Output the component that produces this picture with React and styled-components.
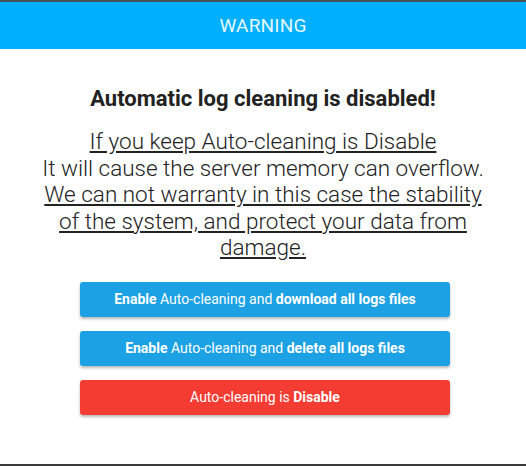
import React from "react";
import styled, { createGlobalStyle } from "styled-components";

const Global = createGlobalStyle`
  html, body { margin: 0; padding: 0; background: #fff; }
  body { font-family: Roboto, "Liberation Sans", sans-serif; }
`;

const Frame = styled.div`
  width: 526px;
  height: 466px;
  box-sizing: border-box;
  border-top: 2px solid #4b5258;
  border-bottom: 2px solid #3a3a3a;
  display: flex;
  flex-direction: column;
  background: #fff;
`;

const Header = styled.div`
  height: 47px;
  background: #00b0ff;
  color: #e6f8ff;
  font-size: 19px;
  font-weight: 400;
  display: flex;
  align-items: center;
  justify-content: center;
  letter-spacing: 0.2px;
`;

const Content = styled.div`
  display: flex;
  flex-direction: column;
  align-items: center;
  padding-top: 37px;
`;

const Title = styled.h2`
  margin: 0;
  font-size: 22px;
  font-weight: 700;
  color: #222;
  line-height: 26px;
`;

const Message = styled.p`
  margin: 16px 0 0;
  width: 448px;
  text-align: center;
  font-size: 22.5px;
  font-weight: 300;
  color: #222;
  line-height: 26.5px;
`;

const Underlined = styled.span`
  text-decoration: underline;
  text-underline-offset: 2px;
`;

const Actions = styled.div`
  margin: 21px 0 0 4px;
  display: flex;
  flex-direction: column;
  gap: 14px;
  width: 370px;
`;

const ActionButton = styled.button`
  height: 35px;
  border: none;
  border-radius: 3px;
  background: ${(p) => (p.$danger ? "#f43c33" : "#1ca1e4")};
  color: #fff;
  font-family: Roboto, "Liberation Sans", sans-serif;
  font-size: 14px;
  font-weight: 400;
  box-shadow: 0 2px 3px rgba(0, 0, 0, 0.28);
  cursor: pointer;
  b { font-weight: 700; }
`;

export default function App() {
  return (
    <>
      <Global />
      <Frame>
        <Header>WARNING</Header>
        <Content>
          <Title>Automatic log cleaning is disabled!</Title>
          <Message>
            <Underlined>If you keep Auto-cleaning is Disable</Underlined>
            <br />
            It will cause the server memory can overflow.
            <br />
            <Underlined>
              We can not warranty in this case the stability of the system, and
              protect your data from damage.
            </Underlined>
          </Message>
          <Actions>
            <ActionButton>
              <b>Enable</b> Auto-cleaning and <b>download all logs files</b>
            </ActionButton>
            <ActionButton>
              <b>Enable</b> Auto-cleaning and <b>delete all logs files</b>
            </ActionButton>
            <ActionButton $danger>
              Auto-cleaning is <b>Disable</b>
            </ActionButton>
          </Actions>
        </Content>
      </Frame>
    </>
  );
}
